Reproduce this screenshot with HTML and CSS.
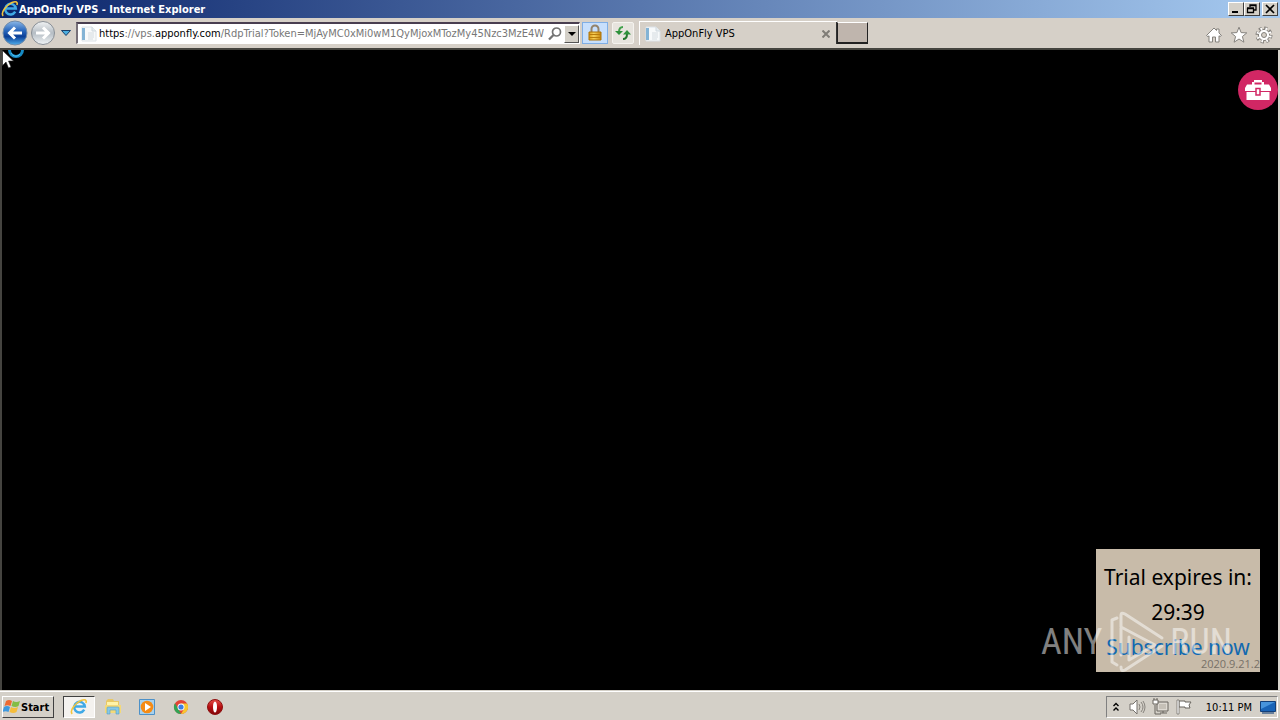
FILE: index.html
```html
<!DOCTYPE html>
<html lang="en">
<head>
<meta charset="utf-8">
<title>AppOnFly VPS - Internet Explorer</title>
<link rel="stylesheet" href="styles.css">
</head>
<body>
<svg class="defs" aria-hidden="true">
  <defs>
    <linearGradient id="blueBall" x1="0" y1="0" x2="0" y2="1"><stop offset="0" stop-color="#8db9e8"/><stop offset=".4" stop-color="#2a68bd"/><stop offset=".65" stop-color="#0b3f97"/><stop offset="1" stop-color="#4fb0ee"/></linearGradient>
    <linearGradient id="paleBall" x1="0" y1="0" x2="0" y2="1"><stop offset="0" stop-color="#f1f3f4"/><stop offset=".5" stop-color="#b5bdc4"/><stop offset="1" stop-color="#f0f4f6"/></linearGradient>
    <linearGradient id="gold" x1="0" y1="0" x2="1" y2="0"><stop offset="0" stop-color="#d69718"/><stop offset=".4" stop-color="#f6cf57"/><stop offset="1" stop-color="#c7840c"/></linearGradient>
    <linearGradient id="redBall" x1="0" y1="0" x2="0" y2="1"><stop offset="0" stop-color="#e5504a"/><stop offset=".5" stop-color="#b80f12"/><stop offset="1" stop-color="#7f0507"/></linearGradient>
    <symbol id="ie" viewBox="0 0 18 18">
      <path d="M14.200 11.700A5.300 5.300 0 1 1 14.800 8.500H5.500" fill="none" stroke="#3fa9e6" stroke-width="2.500"/>
      <path d="M2.200 15.800C-.7 13 5.200 5 11 2.500c4-1.700 6-.7 4.900 2.500" fill="none" stroke="#f3c43c" stroke-width="1.600"/>
    </symbol>
    <symbol id="page" viewBox="0 0 16 16">
      <path d="M1 1h10l4 4v10H1z" fill="#f7f9fa" stroke="#dce2e7"/>
      <path d="M1 2h3v12H1z" fill="#83b3d5"/>
      <path d="M7 7h6M7 9h6M7 11h6M7 13h5" stroke="#d4dbe0"/>
      <path d="M11 1v4h4" fill="#e8edf0" stroke="#cfd8de"/>
    </symbol>
  </defs>
</svg>

<header class="titlebar">
  <svg class="i18" aria-hidden="true"><use href="#ie"/></svg>
  <h1>AppOnFly VPS - Internet Explorer</h1>
  <div class="window-buttons">
    <button aria-label="Minimize"><svg viewBox="0 0 12 10"><path d="M2 8h6" stroke="#000" stroke-width="2"/></svg></button>
    <button aria-label="Restore"><svg viewBox="0 0 12 10"><path d="M4 3V1h6v5H8M4 1.500h6M1.500 4.500h6v4h-6zM1 4h7" fill="none" stroke="#000" stroke-width="1.300"/></svg></button>
    <button class="close" aria-label="Close"><svg viewBox="0 0 12 10"><path d="M2 1l8 8M10 1L2 9" stroke="#000" stroke-width="1.700"/></svg></button>
  </div>
</header>

<nav class="toolbar">
  <button class="plain" aria-label="Back"><svg class="i26" viewBox="0 0 26 26"><circle cx="13" cy="13" r="12" fill="url(#blueBall)" stroke="#718ba9"/><path d="M20 13H8M13 7.500L7.500 13l5.500 5.500" fill="none" stroke="#fff" stroke-width="3"/></svg></button>
  <button class="plain forward" aria-label="Forward"><svg class="i26" viewBox="0 0 26 26"><circle cx="13" cy="13" r="11.500" fill="url(#paleBall)" stroke="#898f96"/><path d="M6 13h12M13 7.500l5.500 5.500-5.500 5.500" fill="none" stroke="#fff" stroke-width="3"/></svg></button>
  <button class="plain recent" aria-label="Recent pages"><svg viewBox="0 0 10 6"><path d="M.5.5h9L5 5.500z" fill="#4badde" stroke="#173d69"/></svg></button>
  <div class="address">
    <svg class="i16" aria-hidden="true"><use href="#page"/></svg>
    <a class="url" href="#"><b>https</b>://vps.<b>apponfly.com</b>/RdpTrial?Token=MjAyMC0xMi0wM1QyMjoxMTozMy45Nzc3MzE4WwWw</a>
    <button class="plain search" aria-label="Search"><svg class="i16" viewBox="0 0 16 16"><circle cx="9.500" cy="6" r="4" fill="#fff" stroke="#737373" stroke-width="1.700"/><path d="M6.500 9L2 13.500" stroke="#737373" stroke-width="2.300"/></svg></button>
    <button class="drop" aria-label="Show addresses"><svg viewBox="0 0 8 4"><path d="M0 0h8L4 4z"/></svg></button>
  </div>
  <button class="lock" aria-label="Security report"><svg class="i18" viewBox="0 0 18 18"><path d="M5.500 9V5a3.500 3.500 0 0 1 7 0v4" fill="none" stroke="#94836a" stroke-width="2"/><path d="M3 8h12v8H3z" fill="url(#gold)" stroke="#ad7208"/><path d="M3 10.500h12M3 13.500h12" stroke="#b87c0c"/></svg></button>
  <button class="refresh" aria-label="Refresh"><svg class="i16" viewBox="0 0 16 16"><path d="M8 2C5 2 4 4 4 7" fill="none" stroke="#42a14c" stroke-width="2"/><path d="M0 6h8L4 10z" fill="#2f913c"/><path d="M8 14c3 0 4-2 4-5" fill="none" stroke="#24772e" stroke-width="2"/><path d="M8 9.500h8L12 5z" fill="#2f913c"/></svg></button>
  <div class="tab">
    <svg class="i16" aria-hidden="true"><use href="#page"/></svg>
    <span>AppOnFly VPS</span>
    <button class="plain" aria-label="Close tab"><svg viewBox="0 0 8 8"><path d="M.5.5l7 7M7.500.5l-7 7" stroke="#807d77" stroke-width="2"/></svg></button>
  </div>
  <button class="newtab" aria-label="New tab"></button>
  <div class="tools">
    <button class="plain" aria-label="Home"><svg viewBox="0 0 18 18"><path d="M1.500 9.500L9 2l2.500 2.500V3h2.500v4l2.500 2.500-1.500 1-1-.7V16h-3.500v-5h-3v5H4V9.800l-1 .9z" fill="#fff" stroke="#85827d"/></svg></button>
    <button class="plain" aria-label="Favorites"><svg viewBox="0 0 18 18"><path d="M9 1.200l2.100 5.400 5.700.3-4.400 3.600 1.500 5.700L9 13l-4.900 3.200 1.500-5.700L1.200 6.900l5.700-.3z" fill="#fff" stroke="#85827d"/></svg></button>
    <button class="plain" aria-label="Settings"><svg viewBox="0 0 18 18"><circle cx="9" cy="9" r="6.700" fill="none" stroke="#85827d" stroke-width="3.600" stroke-dasharray="3 2.260"/><circle cx="9" cy="9" r="5.600" fill="#fff" stroke="#85827d"/><circle cx="9" cy="9" r="6.300" fill="none" stroke="#fff" stroke-width="2.800" stroke-dasharray="1.600 3.348" stroke-dashoffset="-.7"/><circle cx="9" cy="9" r="2.500" fill="#d6d0c7" stroke="#85827d"/></svg></button>
  </div>
</nav>

<main class="remote">
  <svg class="spinner" viewBox="0 0 16 9" aria-hidden="true"><path d="M1.500 0a6.500 6.500 0 0 0 13 0" fill="none" stroke="#168ac4" stroke-width="3"/><path d="M3 3c2 4 7 4 9 1" fill="none" stroke="#55c3f2"/></svg>
  <svg class="pointer" viewBox="0 0 12 19" aria-hidden="true"><path d="M.5.5v15L4 12l2.500 6 2.500-1-2.500-6h5z" fill="#fff" stroke="#222" stroke-width=".6"/></svg>
  <button class="toolbox" aria-label="Toolbox"><svg viewBox="0 0 26 22"><path d="M7 6V3h2V1h8v2h2v3h-2.500V3.500h-7V6z" fill="#fff"/><path d="M2 5.500h22L26 9v3H0V9zM1.500 13h23v8h-23z" fill="#fff"/><path d="M11 9.500h4v6.500h-4z" fill="#fff" stroke="#d12764" stroke-width="1.500"/></svg></button>
  <aside class="trial">
    <span>Trial expires in:</span>
    <time>29:39</time>
    <a href="#">Subscribe now</a>
  </aside>
  <div class="watermark">
    <span>ANY</span>
    <svg viewBox="0 0 58 64" aria-hidden="true"><path d="M10 8L5 10v42l5 3M14 45V5q0-3 4-1l37 24M14 17l34 18-26 15V27M14 57q0 5 4 3l37-24" fill="none" stroke="#fff" stroke-width="3" stroke-linejoin="round" stroke-linecap="round"/></svg>
    <span>RUN</span>
  </div>
  <small class="version">2020.9.21.2</small>
</main>

<footer class="taskbar">
  <button class="start"><svg class="i18" viewBox="0 0 18 18" aria-hidden="true"><path d="M3 3q3-2 6 0L7.500 8q-3-1.500-6 0z" fill="#ee6a32"/><path d="M10 3q3 2 7 0l-1.500 5q-3 2-7 0z" fill="#83bd46"/><path d="M1 9q3-2 6 0l-1.500 5q-3-1.500-6 0z" fill="#3e99df"/><path d="M8 9q3 2 7 0l-1.500 5q-3 2-7 0z" fill="#f5bd3b"/></svg>Start</button>
  <button class="app active" aria-label="Internet Explorer"><svg class="i18"><use href="#ie"/></svg></button>
  <button class="app" aria-label="Explorer"><svg class="i18" viewBox="0 0 18 18"><path d="M2 3l2-2h5l1 2h5v12H2z" fill="#e8c865"/><path d="M3 4h11v5H3z" fill="#fff3a8"/><path d="M1 7h16v8H1z" fill="#f4d978"/><path d="M3 16v-6q0-1 1-1h10q1 0 1 1v6h-3v-4H6v4z" fill="#87c8e7" stroke="#559fbf" stroke-width=".6"/></svg></button>
  <button class="app" aria-label="Media Player"><svg class="i18" viewBox="0 0 18 18"><path d="M1.500 1.500h15v15h-15z" fill="#a7d1ee" stroke="#4d91c8"/><circle cx="9" cy="9" r="6.300" fill="#f58b15"/><path d="M7 5l6 4-6 4z" fill="#fff"/></svg></button>
  <button class="app" aria-label="Chrome"><svg class="i18" viewBox="0 0 18 18"><circle cx="9" cy="9" r="7" fill="#e34335"/><path d="M3 5.300l3.500 6L9 16A7 7 0 0 1 3 5.300z" fill="#31a354"/><path d="M9 5.500h6.100A7 7 0 0 1 9 16l3-5z" fill="#f8c72e"/><circle cx="9" cy="9" r="3.500" fill="#fff"/><circle cx="9" cy="9" r="2.600" fill="#3d7ee5"/></svg></button>
  <button class="app" aria-label="Opera"><svg class="i18" viewBox="0 0 18 18"><circle cx="9" cy="9" r="7.500" fill="url(#redBall)" stroke="#8e1010"/><ellipse cx="9" cy="9" rx="2" ry="5.500" fill="#fff"/></svg></button>
  <div class="tray">
    <svg class="chevrons" viewBox="0 0 8 10"><path d="M1.500 4L4 1.500 6.500 4M1.500 8.500L4 6l2.500 2.500" fill="none" stroke="#000" stroke-width="1.400"/></svg>
    <svg class="i18" viewBox="0 0 18 18"><path d="M2 6h3l4-4v14l-4-4H2z" fill="#fff" stroke="#75716c"/><path d="M11 6q2 3 0 6M13 4q4 5 0 10M15 3q4 6 0 12" fill="none" stroke="#87837d"/></svg>
    <svg class="i18" viewBox="0 0 18 18"><path d="M5 4h11v9H5z" fill="#ddd9d2" stroke="#69655f"/><path d="M7 6h7v5H7z" fill="#c5c0b7"/><path d="M8 15h7M11 13v2M3 7v9h6" fill="none" stroke="#69655f"/><path d="M1 2h5v4H1zM2 0v2M5 0v2" fill="#fff" stroke="#69655f"/></svg>
    <svg class="i18" viewBox="0 0 18 18"><path d="M3 3h6v1h6l-2 3 1 3H9V9H3z" fill="#fff" stroke="#69655f"/><path d="M1 2h2v14H1z" fill="#fff" stroke="#69655f" stroke-width=".7"/></svg>
    <time>10:11 PM</time>
    <svg class="i18" viewBox="0 0 18 18"><path d="M1.500 3.500h15v10h-15z" fill="#1964b7" stroke="#123f79"/><path d="M2 4h14L2 11z" fill="#4794dc"/><path d="M3 15h12" stroke="#68809c" stroke-width="2"/></svg>
  </div>
</footer>
</body>
</html>
```

FILE: styles.css
```css
* { box-sizing: border-box; }
html, body { height: 100%; margin: 0; }
body {
  display: flex;
  flex-direction: column;
  overflow: hidden;
  background: #d4d0c8;
  font: 11px "DejaVu Sans Condensed", "DejaVu Sans", sans-serif;
  color: #000;
}
button { padding: 0; font: inherit; color: inherit; border-radius: 0; }
svg { display: block; flex: none; }
.defs { position: absolute; width: 0; height: 0; }
.i16 { width: 16px; height: 16px; }
.i18 { width: 18px; height: 18px; }
.i26 { width: 26px; height: 26px; }
.plain { border: 0; background: none; }

.titlebar {
  display: flex;
  align-items: center;
  flex: none;
  height: 18px;
  padding: 0 2px 0 1px;
  background: linear-gradient(90deg, #0a246a, #a6caf0);
  color: #fff;
}
.titlebar h1 { flex: 1; margin: 0; font-size: 11px; font-weight: bold; }
.window-buttons { display: flex; }
.window-buttons button {
  display: grid;
  place-items: center;
  width: 16px;
  height: 14px;
  border: 1px solid;
  border-color: #fff #404040 #404040 #fff;
  background: #d4d0c8;
}
.window-buttons svg { width: 12px; height: 10px; }
.window-buttons .close { margin-left: 2px; }

.toolbar {
  display: flex;
  align-items: center;
  flex: none;
  height: 32px;
  padding: 0 7px 0 2px;
  border-bottom: 2px solid #45443f;
  background: #d6d0c8;
}
.forward { margin-left: 2px; }
.recent { width: 20px; padding: 0 5px; }
.address {
  display: flex;
  align-items: center;
  flex: 0 1 504px;
  min-width: 0;
  height: 22px;
  padding-left: 3px;
  border: 1px solid #fff;
  border-top: 2px solid #493e50;
  border-left: 2px solid #777078;
  background: #fff;
}
.url {
  flex: 1;
  margin-left: 2px;
  min-width: 0;
  overflow: hidden;
  white-space: nowrap;
  color: #777;
  text-decoration: none;
}
.url b { color: #000; font-weight: normal; }
.search { margin: 0 1px 0 3px; }
.drop {
  display: grid;
  place-items: center;
  width: 15px;
  height: 18px;
  border: 1px solid;
  border-color: #fff #555 #555 #fff;
  background: #d4d0c8;
}
.drop svg { width: 8px; height: 4px; }
.lock, .refresh { display: grid; place-items: center; height: 22px; }
.lock { width: 26px; margin-left: 2px; border: 1px solid #7faee5; background: #c7dffc; }
.refresh { width: 22px; margin-left: 4px; border: 1px solid #f5f3ef; background: #e7e4de; border-radius: 2px; }
.tab {
  display: flex;
  align-items: center;
  flex: 0 1 198px;
  height: 24px;
  margin-left: 5px;
  padding: 0 7px 0 5px;
  border-top: 1px solid #fff;
  border-left: 1px solid #fff;
}
.tab span { flex: 1; margin-left: 4px; }
.tab button svg { width: 8px; height: 8px; }
.newtab {
  width: 31px;
  height: 22px;
  border: 1px solid;
  border-width: 1px 1px 2px;
  border-color: #fff #222 #222;
  background: #bfb5ad;
  box-shadow: -1px 0 #333;
}
.tools { display: flex; gap: 7px; margin: 4px 0 0 auto; }
.tools svg { width: 18px; height: 18px; }

.remote {
  position: relative;
  flex: 1;
  min-height: 0;
  border-left: 2px solid #454440;
  border-right: 2px solid #d8d4cd;
  background: #000;
}
.spinner { position: absolute; top: 0; left: 6px; width: 16px; height: 9px; }
.pointer { position: absolute; top: 0; left: 0; width: 12px; height: 19px; }
.toolbox {
  position: absolute;
  top: 20px;
  right: 0;
  display: grid;
  place-items: center;
  width: 40px;
  height: 40px;
  border: 0;
  border-radius: 50%;
  background: #d12764;
}
.toolbox svg { width: 26px; height: 22px; }
.trial {
  position: absolute;
  right: 18px;
  bottom: 18px;
  display: flex;
  flex-direction: column;
  align-items: center;
  min-width: 164px;
  padding: 11px 8px 7px;
  background: #c8bba9;
  font: 21px/35px "Noto Sans", "Open Sans", sans-serif;
  white-space: nowrap;
}
.trial a { color: #1269b0; text-decoration: none; }
.watermark {
  position: absolute;
  right: 46px;
  bottom: 16px;
  display: flex;
  align-items: center;
  gap: 5px;
  color: #fff;
  font: 36px "Roboto Condensed", "Open Sans Condensed", Roboto, sans-serif;
  opacity: .5;
  pointer-events: none;
}
.watermark svg { width: 58px; height: 64px; }
.version {
  position: absolute;
  right: 18px;
  bottom: 19px;
  color: #777067;
  font: 11px "Open Sans", sans-serif;
}

.taskbar {
  display: flex;
  align-items: center;
  flex: none;
  height: 30px;
  padding: 3px 2px 0;
  border-top: 1px solid #d4d0c8;
  box-shadow: inset 0 1px #fff;
  background: #d4d0c8;
}
.start {
  display: flex;
  align-items: center;
  width: 52px;
  height: 22px;
  margin-right: 9px;
  border: 1px solid;
  border-color: #fff #404040 #404040 #fff;
  background: #d4d0c8;
  font-weight: bold;
}
.app {
  display: grid;
  place-items: center;
  width: 32px;
  height: 22px;
  margin-right: 2px;
  border: 1px solid transparent;
  background: none;
}
.app.active { border-color: #404040 #fff #fff #404040; background: #f4f2ef; }
.tray {
  display: flex;
  align-items: center;
  height: 22px;
  margin-left: auto;
  padding: 0 0 0 5px;
  border: 1px solid;
  border-color: #808080 #fff #fff #808080;
}
.tray .i18 { margin-left: 6px; }
.tray .chevrons { width: 8px; height: 10px; margin-right: 2px; }
.tray time { margin: 0 1px 0 12px; }
```
